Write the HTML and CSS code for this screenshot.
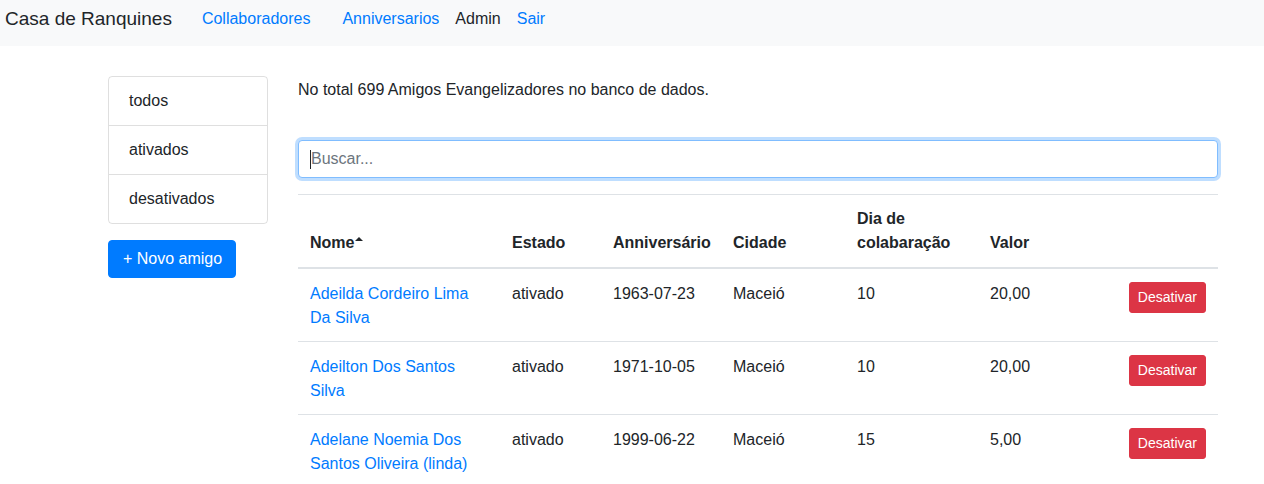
FILE: index.html
```html
<!DOCTYPE html>
<html lang="pt">
<head>
<meta charset="utf-8">
<title>Casa de Ranquines</title>
<link rel="stylesheet" href="styles.css">
</head>
<body>
<nav class="navbar">
  <a class="brand" href="#">Casa de Ranquines</a>
  <a class="nav-link" href="#">Collaboradores</a>
  <a class="nav-link wide" href="#">Anniversarios</a>
  <span class="nav-text">Admin</span>
  <a class="nav-link" href="#">Sair</a>
</nav>
<div class="page">
  <aside class="sidebar">
    <ul class="list-group">
      <li class="list-item">todos</li>
      <li class="list-item">ativados</li>
      <li class="list-item">desativados</li>
    </ul>
    <button class="btn-primary">+ Novo amigo</button>
  </aside>
  <main class="main">
    <p class="total">No total 699 Amigos Evangelizadores no banco de dados.</p>
    <div class="search-wrap">
      <input class="search" type="text" placeholder="Buscar...">
      <span class="caret"></span>
    </div>
    <table class="table">
      <thead>
        <tr>
          <th class="c-nome">Nome<span class="sort-up"></span></th>
          <th class="c-estado">Estado</th>
          <th class="c-aniv">Anniversário</th>
          <th class="c-cidade">Cidade</th>
          <th class="c-dia">Dia de colabaração</th>
          <th class="c-valor">Valor</th>
          <th class="c-acao"></th>
        </tr>
      </thead>
      <tbody>
        <tr>
          <td><a href="#">Adeilda Cordeiro Lima Da Silva</a></td>
          <td>ativado</td>
          <td>1963-07-23</td>
          <td>Maceió</td>
          <td>10</td>
          <td>20,00</td>
          <td class="acao"><button class="btn-danger">Desativar</button></td>
        </tr>
        <tr>
          <td><a href="#">Adeilton Dos Santos Silva</a></td>
          <td>ativado</td>
          <td>1971-10-05</td>
          <td>Maceió</td>
          <td>10</td>
          <td>20,00</td>
          <td class="acao"><button class="btn-danger">Desativar</button></td>
        </tr>
        <tr>
          <td><a href="#">Adelane Noemia Dos Santos Oliveira (linda)</a></td>
          <td>ativado</td>
          <td>1999-06-22</td>
          <td>Maceió</td>
          <td>15</td>
          <td>5,00</td>
          <td class="acao"><button class="btn-danger">Desativar</button></td>
        </tr>
      </tbody>
    </table>
  </main>
</div>
</body>
</html>
```
FILE: styles.css
```css
* { box-sizing: border-box; }
body {
  margin: 0;
  font-family: "Liberation Sans", Arial, sans-serif;
  font-size: 16px;
  line-height: 1.5;
  color: #212529;
  background: #fff;
}
a { color: #007bff; text-decoration: none; }

.navbar {
  display: flex;
  align-items: flex-start;
  height: 46px;
  padding: 4px 5px 0;
  background: #f8f9fa;
}
.brand {
  font-size: 19px;
  line-height: 30px;
  color: #212529;
  margin-right: 22px;
}
.nav-link { padding: 3px 8px; }
.nav-link.wide { margin-left: 16px; }
.nav-text { padding: 3px 8px; color: #212529; }

.page {
  display: flex;
  gap: 30px;
  padding-left: 108px;
  margin-top: 30px;
}
.sidebar { width: 160px; flex: none; }
.list-group {
  list-style: none;
  margin: 0;
  padding: 0;
  border: 1px solid rgba(0,0,0,.125);
  border-radius: 4px;
}
.list-item {
  padding: 12px 20px;
  border-top: 1px solid rgba(0,0,0,.125);
}
.list-item:first-child { border-top: 0; }
.btn-primary {
  margin-top: 16px;
  font: inherit;
  line-height: 24px;
  padding: 6px 13px 6px 14px;
  color: #fff;
  background: #007bff;
  border: 1px solid #007bff;
  border-radius: 4px;
}

.main { width: 920px; flex: none; }
.total { margin: 2px 0 0; }
.search-wrap { position: relative; margin-top: 38px; margin-bottom: 16px; }
.search {
  display: block;
  width: 100%;
  height: 38px;
  padding: 6px 12px;
  font: inherit;
  color: #495057;
  border: 1px solid #80bdff;
  border-radius: 4px;
  outline: 0;
  box-shadow: 0 0 0 3px rgba(0,123,255,.25);
}
.search::placeholder { color: #6c757d; }
.caret {
  position: absolute;
  left: 12px;
  top: 10px;
  width: 1px;
  height: 19px;
  background: #212529;
}

.table { width: 920px; border-collapse: collapse; table-layout: fixed; }
.table th, .table td {
  padding: 12px;
  text-align: left;
  vertical-align: top;
  border-top: 1px solid #dee2e6;
}
.table th {
  vertical-align: bottom;
  border-bottom: 2px solid #dee2e6;
}
.c-nome { width: 202px; }
.c-estado { width: 101px; }
.c-aniv { width: 120px; white-space: nowrap; }
.c-cidade { width: 124px; }
.c-dia { width: 133px; }
.c-valor { width: 120px; }
.sort-up {
  display: inline-block;
  vertical-align: top;
  margin-top: 6px;
  margin-left: 1px;
  width: 0;
  height: 0;
  border-left: 4px solid transparent;
  border-right: 4px solid transparent;
  border-bottom: 4px solid #212529;
}
.table td { padding-top: 13px; padding-bottom: 11px; }
.table td.acao { text-align: right; padding-top: 12px; padding-bottom: 12px; }
.btn-danger {
  font: inherit;
  font-size: 14px;
  line-height: 21px;
  padding: 4px 8px;
  color: #fff;
  background: #dc3545;
  border: 1px solid #dc3545;
  border-radius: 3px;
  margin-top: 1px;
}
```
